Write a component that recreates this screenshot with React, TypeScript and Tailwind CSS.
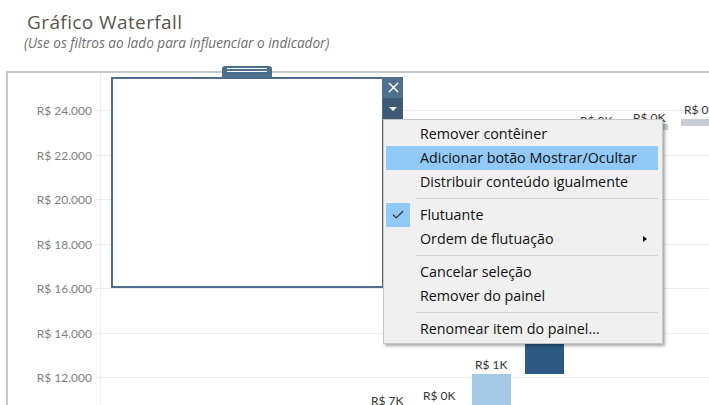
import { Check, X } from "lucide-react";

const gridYs = [110, 155, 199, 244, 288, 333, 377];
const axisLabels = ["R$ 24.000", "R$ 22.000", "R$ 20.000", "R$ 18.000", "R$ 16.000", "R$ 14.000", "R$ 12.000"];

type Item = { label: string; highlight?: boolean; checked?: boolean; submenu?: boolean } | "sep";

const menuItems: Item[] = [
  { label: "Remover contêiner" },
  { label: "Adicionar botão Mostrar/Ocultar", highlight: true },
  { label: "Distribuir conteúdo igualmente" },
  "sep",
  { label: "Flutuante", checked: true },
  { label: "Ordem de flutuação", submenu: true },
  "sep",
  { label: "Cancelar seleção" },
  { label: "Remover do painel" },
  "sep",
  { label: "Renomear item do painel..." },
];

function Chart() {
  return (
    <svg className="block" width={701} height={332} viewBox="8 73 701 332">
      {gridYs.map((y) => (
        <line key={y} x1={95} x2={709} y1={y + 0.5} y2={y + 0.5} stroke="#eeeeee" />
      ))}
      <line x1={100.5} x2={100.5} y1={73} y2={405} stroke="#f0f0f0" />
      {gridYs.map((y, i) => (
        <text
          key={y}
          x={92}
          y={y + 4.5}
          textAnchor="end"
          fontSize={12}
          fill="#808080"
          fontFamily="Lato, sans-serif"
        >
          {axisLabels[i]}
        </text>
      ))}
      {/* bars */}
      <rect x={628} y={124} width={40} height={6} fill="#c9ced6" />
      <rect x={681} y={119} width={30} height={7} fill="#c9ced6" />
      <rect x={525} y={343} width={39} height={31} fill="#2d5985" />
      <rect x={472} y={374} width={39} height={32} fill="#a2c8e3" />
      {/* data labels */}
      <g fontSize={12} fill="#333" fontFamily="Lato, sans-serif">
        <text x={684} y={114}>R$ 0</text>
        <text x={633} y={122}>R$ 0K</text>
        <text x={580} y={125}>R$ 0K</text>
        <text x={475} y={369}>R$ 1K</text>
        <text x={423} y={400}>R$ 0K</text>
        <text x={371} y={405}>R$ 7K</text>
      </g>
    </svg>
  );
}

function ContextMenu() {
  return (
    <div className="absolute left-[383px] top-[119px] w-[280px] border border-[#c6c6c6] bg-[#f0f0f0] pl-[2px] pr-[4px] pt-[2px] pb-[2px] shadow-[2px_2px_3px_rgba(0,0,0,0.35)] font-['Open_Sans',sans-serif] text-[14.3px] text-[#111]">
      {menuItems.map((item, i) =>
        item === "sep" ? (
          <div key={i} className="flex h-[9px] items-center pl-[30px]">
            <div className="h-px w-full bg-[#d5d5d5]" />
          </div>
        ) : (
          <div
            key={i}
            className={`relative flex h-[24px] items-center ${item.highlight ? "bg-[#91c9f7]" : ""}`}
          >
            <div className={`flex h-[24px] w-[24px] items-center justify-center ${item.checked ? "bg-[#91c9f7]" : ""}`}>
              {item.checked && <Check className="h-[14px] w-[14px] text-[#333]" strokeWidth={2.2} />}
            </div>
            <span className="ml-[10px] leading-none">{item.label}</span>
            {item.submenu && (
              <span className="absolute left-[257px] top-[9px] h-0 w-0 border-y-[3.5px] border-l-[4px] border-y-transparent border-l-black" />
            )}
          </div>
        )
      )}
    </div>
  );
}

export default function App() {
  return (
    <div className="relative h-[405px] w-[709px] overflow-hidden bg-white">
      <div className="pl-[27px] pt-[10px] font-['Open_Sans',sans-serif] text-[19px] font-medium leading-[24px] tracking-[0.4px] text-[#5b5550]">
        Gráfico Waterfall
      </div>
      <div className="pl-[24px] pt-[1px] font-['Open_Sans',sans-serif] text-[13.6px] italic leading-[16px] text-[#6f6f6f]">
        (Use os filtros ao lado para influenciar o indicador)
      </div>
      <div className="ml-[6px] mt-[20px] border-l-2 border-t-2 border-[#c8c8c8]">
        <Chart />
      </div>

      {/* floating container */}
      <div className="absolute left-[222px] top-[66px] flex h-[12px] w-[50px] flex-col items-center gap-[2px] rounded-t-[3px] bg-[#4e6e8e] pt-[2px]">
        <div className="h-px w-[40px] bg-white" />
        <div className="h-px w-[40px] bg-white" />
      </div>
      <div className="absolute left-[111px] top-[77px] h-[211px] w-[273px] border-2 border-[#4e6d8d] bg-white" />
      <div className="absolute left-[383px] top-[77px] flex h-[21px] w-[20px] items-center justify-center bg-[#4f6f8f]">
        <X className="h-[17px] w-[17px] text-white" strokeWidth={2} />
      </div>
      <div className="absolute left-[383px] top-[98px] flex h-[21px] w-[20px] items-center justify-center bg-[#3e5975]">
        <span className="h-0 w-0 border-x-[4px] border-t-[4px] border-x-transparent border-t-white" />
      </div>
      <ContextMenu />
    </div>
  );
}
